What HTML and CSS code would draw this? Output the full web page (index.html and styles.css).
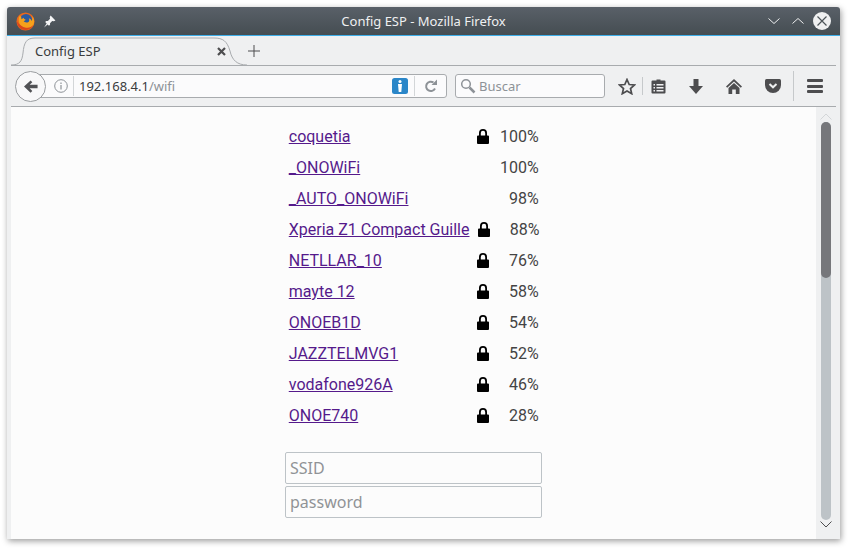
FILE: index.html
```html
<!DOCTYPE html>
<html>
<head>
    <title>Config ESP</title>
    <link rel="stylesheet" href="styles.css">
</head>
<body>
    <div class="window">
        <div class="titlebar">
            <svg class="logo" width="19" height="19" viewBox="0 0 20 20">
                <circle cx="10" cy="10" r="9.5" fill="#e8681d"/>
                <circle cx="10.5" cy="8.5" r="6.5" fill="#2a5aa0"/>
                <path d="M3 6C2 12 6 18 11 18c4 0 7.500-3 8-7 .3-2.500-.5-5-2-6.500 .5 2 .3 3.500-.5 5-.5-1.500-1.500-2.500-3-3 1 2 .5 4-1.500 4.500-2 .3-3.500-.5-4-1.500 1.500 0 2-1 2-1.500-1-.3-2-1-1.800-2-1 .5-1.800 1-2.200 1.500-.5-.5-.5-1.500-.5-2.500C3.500 4 3 5 3 6z" fill="#f5a11c"/>
                <path d="M1 10c0 5 4 9 9 9 4 0 7-2 8.500-5.500-2 2.500-5 3.500-8 3-4-.6-7-3-9.500-6.500z" fill="#d9471c"/>
            </svg>
            <svg class="pin" width="13" height="13" viewBox="0 0 12 12">
                <path d="M7 .5 11.500 5 10 5.800 8.500 5.500 6.500 7.500 6.500 9 5.500 10 2 6.500 3 5.500 4.500 5.500 6.500 3.500 6.200 2zM3.500 7.500 4.500 8.500 1 11.500z" fill="#f4f5f6"/>
            </svg>
            <span class="title">Config ESP - Mozilla Firefox</span>
            <svg class="win-btn" width="14" height="14" viewBox="0 0 14 14"><path d="M1.500 4.500 7 9.500 12.500 4.500" fill="none" stroke="#eff0f1" stroke-width="1"/></svg>
            <svg class="win-btn" width="14" height="14" viewBox="0 0 14 14"><path d="M1.500 9.500 7 4.500 12.500 9.500" fill="none" stroke="#eff0f1" stroke-width="1"/></svg>
            <svg class="win-close" width="18" height="18" viewBox="0 0 18 18">
                <circle cx="9" cy="9" r="9" fill="#eff0f1"/>
                <path d="M4.500 4.500 13.500 13.500M13.500 4.500 4.500 13.500" stroke="#4d5459" stroke-width="1.200"/>
            </svg>
        </div>

        <div class="tabbar">
            <div class="tab">
                <svg class="tab-shape" width="240" height="29" viewBox="0 0 240 29">
                    <path d="M0 28C9 28 11 24 12 16 13 6 15 1 24 1L203 1C212 1 216 4 219 14 221 23 226 28 236 28" fill="#eff0f1" stroke="#a8abae"/>
                </svg>
                <span class="tab-label">Config ESP</span>
                <svg class="tab-close" width="9" height="9" viewBox="0 0 9 9"><path d="M1 1 8 8M8 1 1 8" stroke="#4d4d4f" stroke-width="2.200"/></svg>
            </div>
            <svg class="new-tab" width="12" height="12" viewBox="0 0 12 12"><path d="M6 0V12M0 6H12" stroke="#4d4d4f"/></svg>
        </div>

        <div class="navbar">
            <div class="back">
                <svg width="14" height="13" viewBox="0 0 16 14"><path d="M7.500 0 9.500 2 6.500 5H15.500V9H6.500L9.500 12 7.500 14 0 7z" fill="#515255"/></svg>
            </div>
            <div class="urlbar">
                <svg class="info" width="14" height="14" viewBox="0 0 14 14">
                    <circle cx="7" cy="7" r="6.300" fill="none" stroke="#8d9297"/>
                    <path d="M7 6V10.500M7 3.500V5" stroke="#8d9297" stroke-width="1.200"/>
                </svg>
                <span class="url-sep first"></span>
                <span class="url"><span class="host">192.168.4.1</span>/wifi</span>
                <svg class="reader" width="16" height="16" viewBox="0 0 16 16">
                    <rect width="16" height="16" rx="2.500" fill="#2a86c8"/>
                    <circle cx="8" cy="3.500" r="1.500" fill="#fff"/>
                    <path d="M6 6H10L9.300 14H6.700z" fill="#fff"/>
                </svg>
                <span class="url-sep"></span>
                <svg class="reload" width="14" height="14" viewBox="0 0 14 14">
                    <path d="M11 9.500A4.700 4.700 0 1 1 9.500 3.500" fill="none" stroke="#8d9297" stroke-width="2"/>
                    <path d="M7.500 6H13V.5z" fill="#8d9297"/>
                </svg>
            </div>
            <div class="searchbar">
                <svg width="16" height="16" viewBox="0 0 16 16">
                    <circle cx="6" cy="6" r="4.300" fill="none" stroke="#8d9297" stroke-width="1.500"/>
                    <path d="M9.500 9.500 14.500 14.500" stroke="#8d9297" stroke-width="2.500"/>
                </svg>
                <span class="search-text">Buscar</span>
            </div>
            <div class="tools">
                <svg class="tool-star" width="18" height="17" viewBox="0 0 18 17"><path d="M9 1.500 11.200 6.500 16.500 7 12.500 10.500 13.700 15.700 9 13 4.300 15.700 5.500 10.500 1.500 7 6.800 6.500z" fill="none" stroke="#4d4d4f" stroke-width="1.700"/></svg>
                <span class="tool-sep"></span>
                <svg class="tool-list" width="15" height="16" viewBox="0 0 15 16">
                    <path d="M5.500 2.500V1.500H9.500V2.500H13.500Q14.500 2.500 14.500 3.500V14.500Q14.500 15.500 13.500 15.500H1.500Q.5 15.500 .5 14.500V3.500Q.5 2.500 1.500 2.500z" fill="#4d4d4f"/>
                    <path d="M2.500 6H4V7.500H2.500zM5.500 6H12.500V7.500H5.500zM2.500 9H4V10.500H2.500zM5.500 9H12.500V10.500H5.500zM2.500 12H4V13.500H2.500zM5.500 12H12.500V13.500H5.500z" fill="#eff0f1"/>
                </svg>
                <svg class="tool-down" width="14" height="15" viewBox="0 0 14 15"><path d="M4.500 0H9.500V7H14L7 15 0 7H4.500z" fill="#4d4d4f"/></svg>
                <svg class="tool-home" width="16" height="15" viewBox="0 0 16 15"><path d="M8 0 16 7.500 14.800 8.700 8 2.500 1.200 8.700 0 7.500zM8 4 13.500 9V15H9.800V10.500H6.200V15H2.500V9z" fill="#4d4d4f"/></svg>
                <svg class="tool-pocket" width="16" height="14" viewBox="0 0 16 14">
                    <path d="M1.500 0H14.500Q16 0 16 1.500V6A8 8 0 0 1 0 6V1.500Q0 0 1.500 0z" fill="#4d4d4f"/>
                    <path d="M4.500 5 8 8.300 11.500 5" fill="none" stroke="#eff0f1" stroke-width="2"/>
                </svg>
                <span class="tool-sep tall"></span>
                <div class="menu"><span></span><span></span><span></span></div>
            </div>
        </div>

        <div class="content">
            <div class="page">
                <div class="networks">
                    <div class="row"><a href="#">coquetia</a><svg class="lock" viewBox="0 0 12 15"><path d="M2 6.500V4a4 4 0 0 1 8 0V6.500H11Q12 6.500 12 7.500V14Q12 15 11 15H1Q0 15 0 14V7.500Q0 6.500 1 6.500zM3.800 6.500H8.200V4A2.200 2.200 0 0 0 3.800 4z"/></svg><span class="pct">100%</span></div>
                    <div class="row"><a href="#">_ONOWiFi</a><span class="pct">100%</span></div>
                    <div class="row"><a href="#">_AUTO_ONOWiFi</a><span class="pct">98%</span></div>
                    <div class="row"><a href="#">Xperia Z1 Compact Guille</a><svg class="lock" viewBox="0 0 12 15"><path d="M2 6.500V4a4 4 0 0 1 8 0V6.500H11Q12 6.500 12 7.500V14Q12 15 11 15H1Q0 15 0 14V7.500Q0 6.500 1 6.500zM3.800 6.500H8.200V4A2.200 2.200 0 0 0 3.800 4z"/></svg><span class="pct">88%</span></div>
                    <div class="row"><a href="#">NETLLAR_10</a><svg class="lock" viewBox="0 0 12 15"><path d="M2 6.500V4a4 4 0 0 1 8 0V6.500H11Q12 6.500 12 7.500V14Q12 15 11 15H1Q0 15 0 14V7.500Q0 6.500 1 6.500zM3.800 6.500H8.200V4A2.200 2.200 0 0 0 3.800 4z"/></svg><span class="pct">76%</span></div>
                    <div class="row"><a href="#">mayte 12</a><svg class="lock" viewBox="0 0 12 15"><path d="M2 6.500V4a4 4 0 0 1 8 0V6.500H11Q12 6.500 12 7.500V14Q12 15 11 15H1Q0 15 0 14V7.500Q0 6.500 1 6.500zM3.800 6.500H8.200V4A2.200 2.200 0 0 0 3.800 4z"/></svg><span class="pct">58%</span></div>
                    <div class="row"><a href="#">ONOEB1D</a><svg class="lock" viewBox="0 0 12 15"><path d="M2 6.500V4a4 4 0 0 1 8 0V6.500H11Q12 6.500 12 7.500V14Q12 15 11 15H1Q0 15 0 14V7.500Q0 6.500 1 6.500zM3.800 6.500H8.200V4A2.200 2.200 0 0 0 3.800 4z"/></svg><span class="pct">54%</span></div>
                    <div class="row"><a href="#">JAZZTELMVG1</a><svg class="lock" viewBox="0 0 12 15"><path d="M2 6.500V4a4 4 0 0 1 8 0V6.500H11Q12 6.500 12 7.500V14Q12 15 11 15H1Q0 15 0 14V7.500Q0 6.500 1 6.500zM3.800 6.500H8.200V4A2.200 2.200 0 0 0 3.800 4z"/></svg><span class="pct">52%</span></div>
                    <div class="row"><a href="#">vodafone926A</a><svg class="lock" viewBox="0 0 12 15"><path d="M2 6.500V4a4 4 0 0 1 8 0V6.500H11Q12 6.500 12 7.500V14Q12 15 11 15H1Q0 15 0 14V7.500Q0 6.500 1 6.500zM3.800 6.500H8.200V4A2.200 2.200 0 0 0 3.800 4z"/></svg><span class="pct">46%</span></div>
                    <div class="row"><a href="#">ONOE740</a><svg class="lock" viewBox="0 0 12 15"><path d="M2 6.500V4a4 4 0 0 1 8 0V6.500H11Q12 6.500 12 7.500V14Q12 15 11 15H1Q0 15 0 14V7.500Q0 6.500 1 6.500zM3.800 6.500H8.200V4A2.200 2.200 0 0 0 3.800 4z"/></svg><span class="pct">28%</span></div>
                </div>
                <form class="wifi-form">
                    <input type="text" placeholder="SSID">
                    <input type="password" placeholder="password">
                </form>
            </div>
            <div class="scrollbar">
                <svg class="arrow" width="12" height="7" viewBox="0 0 12 7"><path d="M.5 6.500 6 1 11.500 6.500" fill="none" stroke="#d3d6d8"/></svg>
                <div class="track"><div class="thumb"></div></div>
                <svg class="arrow" width="12" height="7" viewBox="0 0 12 7"><path d="M.5 .5 6 6 11.500 .5" fill="none" stroke="#4d4d4f"/></svg>
            </div>
        </div>
    </div>
</body>
</html>
```

FILE: styles.css
```css
html, body {
    height: 100%;
}

body {
    margin: 0;
    background-color: #fff;
    padding: 7px 0 0 7px;
    box-sizing: border-box;
    font-family: "Noto Sans", sans-serif;
    overflow: hidden;
}

.window {
    width: 833px;
    height: 532px;
    display: flex;
    flex-direction: column;
    background-color: #eff0f1;
    border-radius: 3px 3px 0 0;
    box-shadow: 1px 2px 6px rgba(0, 0, 0, 0.4);
}

/* title bar */
.titlebar {
    height: 28px;
    flex: none;
    display: flex;
    align-items: center;
    padding: 0 9px 0 9px;
    background: linear-gradient(#596068, #454d52);
    border-bottom: 1px solid #3daee9;
    border-radius: 3px 3px 0 0;
}

.pin {
    margin-left: 8px;
}

.title {
    flex: 1;
    text-align: center;
    color: #eff0f1;
    font-size: 13px;
    padding-left: 24px;
}

.win-btn {
    margin-right: 10px;
}

.win-close {
    margin-left: -2px;
}

/* tabs */
.tabbar {
    height: 29px;
    flex: none;
    margin: 0 4px;
    display: flex;
    align-items: center;
    border-bottom: 1px solid #a8abae;
    box-sizing: content-box;
}

.tab {
    position: relative;
    width: 228px;
    height: 29px;
    display: flex;
    align-items: center;
    padding: 1px 0 0 24px;
    box-sizing: border-box;
    margin-right: 9px;
    font-size: 13px;
    color: #3a3c3e;
}

.tab-shape {
    position: absolute;
    left: 0;
    top: 1px;
}

.tab-label {
    position: relative;
    flex: 1;
}

.tab-close {
    position: relative;
    margin-right: 13px;
}

/* nav bar */
.navbar {
    height: 40px;
    flex: none;
    margin: 0 4px;
    display: flex;
    align-items: center;
    padding-left: 4px;
    border-bottom: 1px solid #a8abae;
}

.back {
    width: 29px;
    height: 29px;
    flex: none;
    display: flex;
    align-items: center;
    justify-content: center;
    border: 1px solid #9a9da0;
    border-radius: 50%;
    background-color: #f8f8f9;
    position: relative;
    z-index: 1;
}

.urlbar {
    width: 392px;
    height: 22px;
    margin-left: -14px;
    padding-left: 21px;
    display: flex;
    align-items: center;
    background-color: #fbfbfc;
    border: 1px solid #a8abae;
    border-radius: 0 3px 3px 0;
    font-size: 13px;
    box-sizing: content-box;
}

.info {
    flex: none;
}

.url-sep {
    width: 1px;
    height: 20px;
    background-color: #d3d6d8;
    margin: 0 6px;
}

.url-sep.first {
    margin: 0 5px;
}

.url {
    flex: 1;
    color: #8d9297;
}

.host {
    color: #3a3c3e;
}

.reload {
    margin-right: 8px;
    margin-left: 3px;
}

.searchbar {
    width: 144px;
    height: 22px;
    margin-left: 8px;
    padding-left: 4px;
    display: flex;
    align-items: center;
    gap: 3px;
    background-color: #fbfbfc;
    border: 1px solid #a8abae;
    border-radius: 3px;
    font-size: 13px;
    color: #8d9297;
}

.tools {
    flex: 1;
    display: flex;
    align-items: center;
}

.tool-star {
    margin-left: 13px;
}

.tool-sep {
    width: 1px;
    height: 18px;
    background-color: #c6c9cb;
    margin: 0 8px 0 6px;
}

.tool-sep.tall {
    height: 30px;
    margin: 0 13px 0 12px;
}

.tool-down {
    margin-left: 23px;
}

.tool-home {
    margin-left: 23px;
}

.tool-pocket {
    margin-left: 23px;
}

.menu {
    width: 16px;
    display: flex;
    flex-direction: column;
    gap: 2.500px;
}

.menu span {
    height: 3px;
    background-color: #4d4d4f;
    border-radius: 1px;
}

/* page */
.content {
    flex: 1;
    min-height: 0;
    display: flex;
    margin: 0 4px;
}

.page {
    flex: 1;
    background-color: #fcfcfc;
    padding-top: 14px;
}

.networks {
    width: 250px;
    margin-left: 277.750px;
}

.row {
    height: 31px;
    display: flex;
    align-items: center;
    font-family: Roboto, sans-serif;
    font-size: 16px;
    color: #444;
    white-space: nowrap;
}

.row a {
    color: #551a8b;
    margin-right: auto;
}

.lock {
    width: 12px;
    height: 15px;
    flex: none;
    margin-left: 8px;
    fill: #000;
}

.pct {
    width: 50px;
    flex: none;
    text-align: right;
}

.wifi-form {
    width: 257px;
    margin: 21px auto 0;
    display: flex;
    flex-direction: column;
    gap: 2px;
}

input {
    height: 32px;
    padding: 0 4px;
    box-sizing: border-box;
    border: 1px solid #bdc3c7;
    border-radius: 2px;
    background-color: #fcfcfc;
    font-family: "Noto Sans", sans-serif;
    font-size: 16px;
    outline: none;
}

input::placeholder {
    color: #909396;
}

/* scroll bar */
.scrollbar {
    width: 20px;
    flex: none;
    display: flex;
    flex-direction: column;
    align-items: center;
    padding: 6px 0 11px;
    box-sizing: border-box;
}

.arrow {
    flex: none;
}

.track {
    flex: 1;
    width: 10px;
    margin: 2px 0 1px;
    background-color: #bdc3c7;
    border-radius: 5px;
}

.thumb {
    height: 156px;
    background-color: #76777b;
    border-radius: 5px;
}
```
